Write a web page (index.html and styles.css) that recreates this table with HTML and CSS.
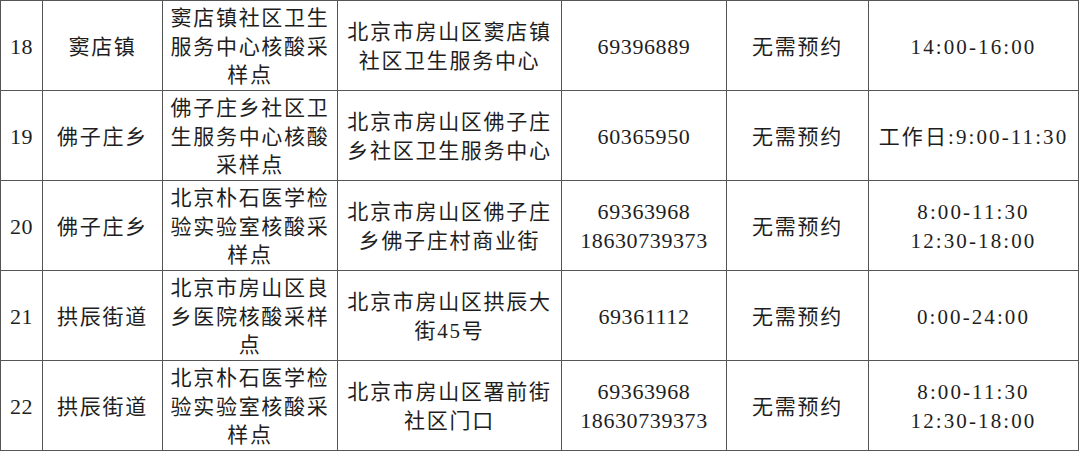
FILE: index.html
```html
<!DOCTYPE html>
<html lang="zh-CN">
<head>
<meta charset="utf-8">
<title>核酸采样点</title>
<link rel="stylesheet" href="styles.css">
</head>
<body>
<table class="sites">
  <colgroup>
    <col class="c-no"><col class="c-town"><col class="c-name"><col class="c-addr"><col class="c-tel"><col class="c-book"><col class="c-time">
  </colgroup>
  <tbody>
    <tr>
      <td class="num">18</td>
      <td>窦店镇</td>
      <td>窦店镇社区卫生服务中心核酸采样点</td>
      <td>北京市房山区窦店镇社区卫生服务中心</td>
      <td class="num">69396889</td>
      <td>无需预约</td>
      <td class="time">14:00-16:00</td>
    </tr>
    <tr>
      <td class="num">19</td>
      <td>佛子庄乡</td>
      <td>佛子庄乡社区卫生服务中心核酸采样点</td>
      <td>北京市房山区佛子庄乡社区卫生服务中心</td>
      <td class="num">60365950</td>
      <td>无需预约</td>
      <td class="time">工作日:9:00-11:30</td>
    </tr>
    <tr>
      <td class="num">20</td>
      <td>佛子庄乡</td>
      <td>北京朴石医学检验实验室核酸采样点</td>
      <td>北京市房山区佛子庄乡佛子庄村商业街</td>
      <td class="num">69363968<br>18630739373</td>
      <td>无需预约</td>
      <td class="time">8:00-11:30<br>12:30-18:00</td>
    </tr>
    <tr>
      <td class="num">21</td>
      <td>拱辰街道</td>
      <td>北京市房山区良乡医院核酸采样点</td>
      <td>北京市房山区拱辰大街45号</td>
      <td class="num">69361112</td>
      <td>无需预约</td>
      <td class="time">0:00-24:00</td>
    </tr>
    <tr>
      <td class="num">22</td>
      <td>拱辰街道</td>
      <td>北京朴石医学检验实验室核酸采样点</td>
      <td>北京市房山区署前街社区门口</td>
      <td class="num">69363968<br>18630739373</td>
      <td>无需预约</td>
      <td class="time">8:00-11:30<br>12:30-18:00</td>
    </tr>
  </tbody>
</table>
</body>
</html>
```

FILE: styles.css
```css
html, body {
  margin: 0;
  padding: 0;
  background: #ffffff;
}

.sites {
  width: 1079px;
  border-collapse: collapse;
  table-layout: fixed;
  font-family: "Liberation Serif", "Noto Sans CJK SC", serif;
  font-size: 21px;
  font-weight: 400;
  color: #1e1e1e;
}

.c-no { width: 42px; }
.c-town { width: 120px; }
.c-name { width: 175px; }
.c-addr { width: 224px; }
.c-tel { width: 165px; }
.c-book { width: 142px; }
.c-time { width: 210px; }

.sites tr {
  height: 90px;
}

.sites td {
  border: 1px solid #555555;
  padding: 3px 3px 0;
  line-height: 28.6px;
  text-align: center;
  vertical-align: middle;
  letter-spacing: 1.7px;
  word-break: break-all;
}

.sites td.num {
  letter-spacing: 0.6px;
  font-size: 22px;
}

.sites td.time {
  letter-spacing: 2.1px;
  white-space: nowrap;
}
```
